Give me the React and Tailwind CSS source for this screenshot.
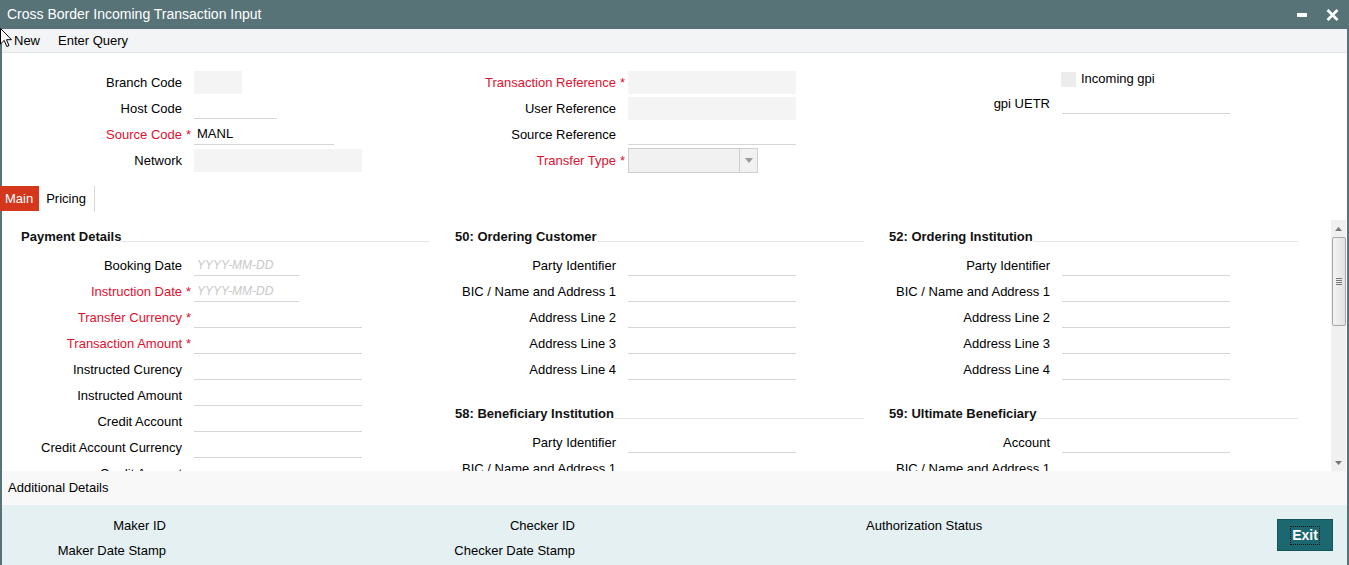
import React from "react";

const RED = "text-[#e0102f]";

function Field({ label, req, w = 168, kind = "line", value, placeholder, h = 26 }) {
  return (
    <div className="flex items-center" style={{ height: h }}>
      <div className={`w-[180px] text-right text-[13px] leading-none ${req ? RED : "text-black"}`}>{label}</div>
      <div className="w-[12px] pl-[4px] text-[13px] leading-none">
        {req ? <span className={RED}>*</span> : null}
      </div>
      {kind === "line" && (
        <div
          className="h-[22px] border-b border-[#d6d6d6] flex items-center text-[13px] pl-[3px]"
          style={{ width: w }}
        >
          {value}
          {placeholder && <span className="italic text-[12px] text-[#c8c8c8]">{placeholder}</span>}
        </div>
      )}
      {kind === "bg" && <div className="h-[23px] bg-[#f4f4f4]" style={{ width: w }} />}
      {kind === "select" && (
        <div className="h-[25px] bg-[#f1f1f1] border border-[#cfcfcf] flex justify-end" style={{ width: w }}>
          <div className="w-[18px] h-full border-l border-[#d0d0d0] flex items-center justify-center">
            <svg width="8" height="5" viewBox="0 0 8 5">
              <path d="M0 0 L8 0 L4 5 Z" fill="#9a9a9a" />
            </svg>
          </div>
        </div>
      )}
    </div>
  );
}

function SectionHead({ title, mt = 0 }) {
  return (
    <div className="flex items-center h-[24px] pl-[19px] mr-[6px] mb-[3px]" style={{ marginTop: mt }}>
      <div className="text-[13px] font-bold text-[#111] whitespace-nowrap">{title}</div>
      <div className="flex-1 h-px bg-[#e6e6e6] mt-[9px]" />
    </div>
  );
}

function Col({ children }) {
  return <div className="w-[434px] shrink-0">{children}</div>;
}

export default function App() {
  return (
    <div className="w-[1349px] h-[565px] overflow-hidden relative bg-white font-['Liberation_Sans',Arial,sans-serif] text-black">
      {/* Title bar */}
      <div className="h-[29px] bg-[#577377] flex items-center justify-between">
        <div className="pl-[7px] text-white text-[14px]">Cross Border Incoming Transaction Input</div>
        <div className="flex items-center pr-[10px]">
          <div className="w-[10px] h-[4px] bg-white mr-[19px] mt-[1px]" />
          <svg width="13" height="12" viewBox="0 0 13 12">
            <path d="M1.5 1 L11.5 11 M11.5 1 L1.5 11" stroke="#fff" strokeWidth="2.6" />
          </svg>
        </div>
      </div>

      <div className="border-x-2 border-[#577377] h-[536px] flex flex-col">
        {/* Toolbar */}
        <div className="h-[24px] bg-[#f3f4f5] border-b border-[#e3e5e6] flex items-center text-[13px] pl-[12px] shrink-0">
          <span>New</span>
          <span className="ml-[18px]">Enter Query</span>
        </div>

        {/* Header fields */}
        <div className="flex pt-[16px] shrink-0">
          <Col>
            <Field label="Branch Code" kind="bg" w={48} />
            <Field label="Host Code" w={83} />
            <Field label="Source Code" req w={140} value="MANL" />
            <Field label="Network" kind="bg" />
          </Col>
          <Col>
            <Field label="Transaction Reference" req kind="bg" />
            <Field label="User Reference" kind="bg" />
            <Field label="Source Reference" />
            <Field label="Transfer Type" req kind="select" w={130} />
          </Col>
          <Col>
            <div className="flex items-center h-[24px] -mt-[2px]">
              <div className="w-[191px]" />
              <div className="w-[15px] h-[15px] bg-[#ececec]" />
              <span className="ml-[5px] text-[13px]">Incoming gpi</span>
            </div>
            <Field label="gpi UETR" h={24} />
          </Col>
        </div>

        {/* Tabs */}
        <div className="flex h-[25px] mt-[13px] shrink-0">
          <div className="h-[25px] bg-[#d4371c] text-white text-[13px] flex items-center pl-[5px] pr-[6px] -ml-[2px]">Main</div>
          <div className="h-[26px] text-[13px] flex items-center pl-[7px] pr-[8px] border-r border-[#d8d8d8]">Pricing</div>
        </div>

        {/* Content */}
        <div className="flex mt-[9px] h-[251px] overflow-hidden shrink-0">
          <div className="flex-1 flex pt-[5px] overflow-hidden">
            <Col>
              <SectionHead title="Payment Details" />
              <Field label="Booking Date" w={105} placeholder="YYYY-MM-DD" />
              <Field label="Instruction Date" req w={105} placeholder="YYYY-MM-DD" />
              <Field label="Transfer Currency" req />
              <Field label="Transaction Amount" req />
              <Field label="Instructed Curency" />
              <Field label="Instructed Amount" />
              <Field label="Credit Account" />
              <Field label="Credit Account Currency" />
              <Field label="Credit Amount" />
            </Col>
            <Col>
              <SectionHead title="50: Ordering Customer" />
              <Field label="Party Identifier" />
              <Field label="BIC / Name and Address 1" />
              <Field label="Address Line 2" />
              <Field label="Address Line 3" />
              <Field label="Address Line 4" />
              <SectionHead title="58: Beneficiary Institution" mt={20} />
              <Field label="Party Identifier" />
              <Field label="BIC / Name and Address 1" />
            </Col>
            <Col>
              <SectionHead title="52: Ordering Institution" />
              <Field label="Party Identifier" />
              <Field label="BIC / Name and Address 1" />
              <Field label="Address Line 2" />
              <Field label="Address Line 3" />
              <Field label="Address Line 4" />
              <SectionHead title="59: Ultimate Beneficiary" mt={20} />
              <Field label="Account" />
              <Field label="BIC / Name and Address 1" />
            </Col>
          </div>
          {/* Scrollbar */}
          <div className="w-[15px] mr-[1px] bg-[#f0f0f0] flex flex-col items-center shrink-0">
            <div className="h-[17px] flex items-center justify-center">
              <svg width="7" height="4" viewBox="0 0 7 4"><path d="M0 4 L7 4 L3.5 0 Z" fill="#777" /></svg>
            </div>
            <div className="w-[14px] h-[89px] border border-[#a8a8a8] rounded-[2px] bg-gradient-to-r from-[#f4f4f4] to-[#e2e2e2] flex items-center justify-center">
              <div className="flex flex-col gap-[1px]">
                <div className="w-[6px] h-px bg-[#777]" />
                <div className="w-[6px] h-px bg-[#777]" />
                <div className="w-[6px] h-px bg-[#777]" />
                <div className="w-[6px] h-px bg-[#777]" />
              </div>
            </div>
            <div className="flex-1" />
            <div className="h-[17px] flex items-center justify-center">
              <svg width="7" height="4" viewBox="0 0 7 4"><path d="M0 0 L7 0 L3.5 4 Z" fill="#777" /></svg>
            </div>
          </div>
        </div>

        {/* Additional details */}
        <div className="h-[34px] bg-[#f8f8f8] flex items-center pl-[6px] text-[13px] shrink-0">Additional Details</div>

        {/* Footer */}
        <div className="flex-1 bg-[#e4f0f2] flex text-[13px] relative">
          <div className="flex flex-col pt-[8px]">
            <div className="flex h-[25px] items-center">
              <div className="w-[164px] text-right">Maker ID</div>
              <div className="w-[409px] text-right">Checker ID</div>
              <div className="ml-[291px]">Authorization Status</div>
            </div>
            <div className="flex h-[25px] items-center">
              <div className="w-[164px] text-right">Maker Date Stamp</div>
              <div className="w-[409px] text-right">Checker Date Stamp</div>
            </div>
          </div>
          <div className="ml-auto mr-[14px] mt-[14px]">
            <div className="w-[56px] h-[32px] bg-[#1b6870] border border-[#14555c] flex items-center justify-center">
              <span className="text-white font-bold text-[14px] outline outline-1 outline-dotted outline-[#111] px-[1px] leading-[17px]">Exit</span>
            </div>
          </div>
        </div>
      </div>

      {/* mouse cursor */}
      <svg className="absolute left-0 top-[28px]" width="13" height="20" viewBox="0 0 13 20">
        <path d="M0.5 0.5 L0.5 16 L4.2 12.4 L6.8 18.5 L9 17.6 L6.5 11.7 L11.5 11.7 Z" fill="#fff" stroke="#000" strokeWidth="1" strokeLinejoin="round" />
      </svg>
    </div>
  );
}
